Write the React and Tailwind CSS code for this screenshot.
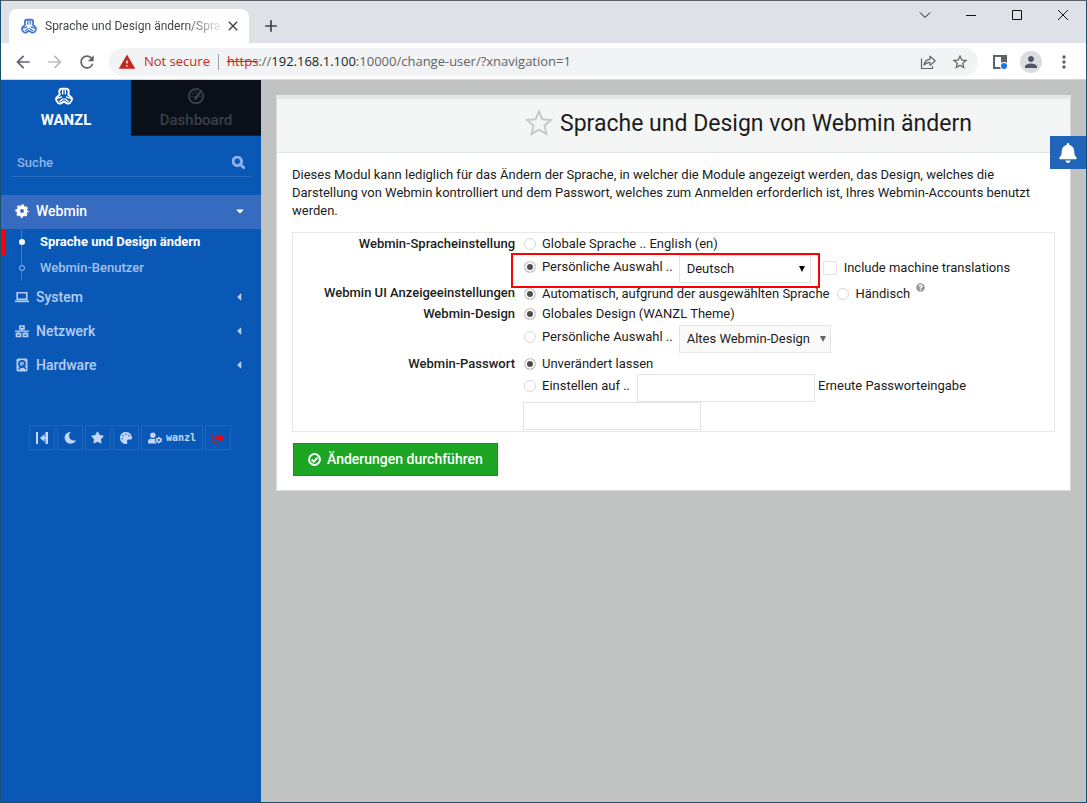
import { FaSearch, FaMoon, FaStar, FaPalette, FaUserCog, FaBell, FaCaretDown, FaCaretLeft, FaQuestionCircle } from "react-icons/fa";
import { MdArrowBack, MdArrowForward, MdRefresh, MdClose, MdAdd, MdWarning, MdStarBorder, MdPerson, MdMoreVert } from "react-icons/md";

const caption = "flex h-9 w-[46px] items-center justify-center text-[#111]";

function WebminLogo({ className }) {
  return (
    <svg className={className} viewBox="0 0 24 24" fill="none" stroke="currentColor" strokeWidth="2.600" strokeLinejoin="round" strokeLinecap="round">
      <path d="M6.200 10.200L5.700 6Q5.700 2.400 9 2.400h6q3.300 0 3.300 3.600l-.5 4.200 3.700 3.300q2.200 2.500.2 5.200l-1.400 2Q18.300 23 15.500 21.500L12 19.200 8.500 21.500Q5.700 23 3.700 20.700l-1.400-2q-2-2.700.2-5.200z" />
      <path d="M10.200 3v6.200M13.800 3v6.200M3.500 15.200l5.200-2M20.500 15.200l-5.200-2M6.500 19l4.200-3.200M17.500 19l-4.200-3.200" strokeWidth="1.900" />
    </svg>
  );
}

function TitleBar() {
  return (
    <div className="flex h-[42px] shrink-0 items-end justify-between bg-[#dee1e6] pl-2">
      <div className="flex items-center">
        <div className="flex h-[34px] w-60 items-center rounded-t-lg bg-white pl-3 pr-2">
          <WebminLogo className="size-4 shrink-0 text-[#3f78cf]" />
          <span className="ml-2 flex-1 whitespace-nowrap bg-gradient-to-r from-[#3c4043] from-80% to-[#3c4043]/10 bg-clip-text font-[Roboto,sans-serif] text-xs text-transparent">
            Sprache und Design ändern/Spra
          </span>
          <button aria-label="Tab schließen" className="ml-1 text-[#3c4043]">
            <MdClose className="size-4" />
          </button>
        </div>
        <button aria-label="Neuer Tab" className="ml-3 text-[#3c4043]">
          <MdAdd className="size-5" />
        </button>
      </div>
      <div className="flex self-start">
        <button aria-label="Tabs durchsuchen" className={caption + " pb-2"}>
          <svg className="h-3 w-3" viewBox="0 0 12 12" fill="none" stroke="currentColor"><path d="M1 3.500l5 5 5-5" /></svg>
        </button>
        <button aria-label="Minimieren" className={caption + " pb-2"}>
          <svg className="h-3 w-3" viewBox="0 0 12 12" stroke="currentColor" shapeRendering="crispEdges"><path d="M1 6.500h10" /></svg>
        </button>
        <button aria-label="Maximieren" className={caption + " pb-2"}>
          <svg className="h-3 w-3" viewBox="0 0 12 12" fill="none" stroke="currentColor"><path d="M1.500 1.500h9v9h-9z" /></svg>
        </button>
        <button aria-label="Schließen" className={caption + " pb-2"}>
          <svg className="h-3 w-3" viewBox="0 0 12 12" stroke="currentColor"><path d="M1 1l10 10M11 1L1 11" /></svg>
        </button>
      </div>
    </div>
  );
}

function Toolbar() {
  return (
    <div className="flex h-[37px] shrink-0 items-center border-b border-[#d5d7da] bg-white pl-3 pr-3 pt-px text-[#5f6368]">
      <button aria-label="Zurück"><MdArrowBack className="size-5" /></button>
      <button aria-label="Vorwärts" className="ml-3 text-[#b9bbbe]"><MdArrowForward className="size-5" /></button>
      <button aria-label="Neu laden" className="ml-3"><MdRefresh className="size-5" /></button>
      <div className="ml-3 flex h-7 flex-1 items-center rounded-full bg-[#f1f3f4] pl-[9px] pr-[9px] font-['Open_Sans',sans-serif] text-[13px]">
        <MdWarning className="size-[18px] text-[#c5281c]" />
        <span className="ml-2 text-[#c5281c]">Not secure</span>
        <span className="mx-2 h-4 w-px bg-[#9aa0a6]" />
        <span className="flex-1 whitespace-nowrap text-[#5f6368]">
          <span className="text-[#c5281c] line-through">https</span>://<span className="text-[#202124]">192.168.1.100</span>:10000/change-user/?xnavigation=1
        </span>
        <button aria-label="Teilen">
          <svg className="size-4" viewBox="0 0 16 16" fill="none" stroke="currentColor" strokeWidth="1.200">
            <path d="M1.500 4.500v10h11v-2.500" />
            <path d="M4 11.200c.4-3.700 2.500-5.700 6-5.900V2.200l5.200 4.600-5.200 4.600V8.300c-2.600 0-4.500.9-6 2.900z" strokeLinejoin="round" />
          </svg>
        </button>
        <button aria-label="Lesezeichen" className="ml-[15px]"><MdStarBorder className="size-[18px]" /></button>
      </div>
      <button aria-label="Seitenleiste" className="ml-3.5">
        <svg className="size-4" viewBox="0 0 16 16">
          <path d="M2 2h12v12H2z" fill="#fff" stroke="#5f6368" strokeWidth="2" />
          <path d="M9 1h6v8H9z" fill="#5f6368" />
          <circle cx="12" cy="12" r="4" fill="#fff" />
          <circle cx="12" cy="12" r="3" fill="#1a73e8" />
        </svg>
      </button>
      <button aria-label="Profil" className="ml-3 flex size-[22px] items-center justify-center rounded-full bg-[#dadce0] text-[#4d5566]">
        <MdPerson className="size-[18px]" />
      </button>
      <button aria-label="Menü" className="ml-3"><MdMoreVert className="size-5" /></button>
    </div>
  );
}

function GaugeIcon() {
  return (
    <svg className="size-4" viewBox="0 0 16 16" fill="none" stroke="currentColor" strokeWidth="1.900">
      <path d="M11.600 2A7.100 7.100 0 1 0 14.300 4.800" />
      <path d="M14 2L8 9.500" strokeWidth="2.400" />
      <circle cx="7.800" cy="9.800" r="2" fill="currentColor" stroke="none" />
      <path d="M3.200 8.500h1.500M4.500 5.200l1 1M7.800 3.300v1.500M11.300 8.500h1.500" strokeWidth="1.500" />
    </svg>
  );
}

function GearIcon() {
  return (
    <svg className="size-3.5" viewBox="0 0 16 16" fill="none" stroke="currentColor">
      <circle cx="8" cy="8" r="4.200" strokeWidth="4" />
      <circle cx="8" cy="8" r="6.400" strokeWidth="2.400" strokeDasharray="2.800 2.226" strokeDashoffset="1.400" />
    </svg>
  );
}

function LaptopIcon() {
  return (
    <svg className="h-3.5 w-3.5" viewBox="0 0 14 14" fill="none" stroke="currentColor" strokeWidth="1.600">
      <path d="M2.200 2.700h9.600v6.600H2.200z" />
      <path d="M0 11.300h14" strokeWidth="1.800" />
    </svg>
  );
}

function NetworkIcon() {
  return (
    <svg className="h-3.5 w-3.5" viewBox="0 0 14 14" fill="none" stroke="currentColor" strokeWidth="1.700">
      <path d="M5 2h4v2.800H5zM1.500 9.700h4v2.800h-4zM8.500 9.700h4v2.800h-4z" />
      <path d="M7 5v2M0 7.200h14M3.500 7v2.500M10.500 7v2.500" strokeWidth="1.300" />
    </svg>
  );
}

function DiskIcon() {
  return (
    <svg className="h-3.5 w-3.5" viewBox="0 0 14 14">
      <rect x="1.500" y="0.500" width="11" height="13" rx="1.500" fill="currentColor" />
      <circle cx="7" cy="6" r="3.900" fill="#0a58b6" />
      <circle cx="7" cy="6" r="2.300" fill="currentColor" opacity="0.750" />
      <path d="M3.500 11.500l2.300-2.500M7.500 6.500l3.500 4.800" stroke="#0a58b6" strokeWidth="1.300" />
    </svg>
  );
}

function NavItem({ icon, label }) {
  return (
    <a href="#nav" className="flex h-[34px] items-center pb-0.5 pl-3.5 pr-4 text-sm font-medium text-[#b8cdf3]">
      {icon}
      <span className="ml-[7px] flex-1">{label}</span>
      <FaCaretLeft className="size-3" />
    </a>
  );
}

const tool = "flex h-[25px] min-w-[26px] items-center justify-center border border-[#1f66bf] text-[#c3d6f8]";

function Sidebar() {
  return (
    <nav className="w-[260px] shrink-0 bg-[#0a58b6] font-[Roboto,sans-serif]">
      <div className="grid h-14 grid-cols-2 text-center">
        <a href="#wanzl" className="flex flex-col items-center pt-[7px] text-white">
          <WebminLogo className="mr-1 size-[18px]" />
          <span className="mt-[5px] text-[15px] font-bold leading-5">WANZL</span>
        </a>
        <a href="#dashboard" className="flex flex-col items-center border-b border-[#222] bg-[#0a101a] pt-[7px] text-[#3c3f46]">
          <span className="flex h-[18px] items-center"><GaugeIcon /></span>
          <span className="mt-[5px] text-[15px] font-medium leading-5">Dashboard</span>
        </a>
      </div>
      <div className="mx-2.5 mt-2.5 flex h-[31px] items-center border-b border-[#2a6dc4] pl-1.5 pr-1.5 pt-0.5 text-[#8fb3ee]">
        <input aria-label="Suche" placeholder="Suche" className="min-w-0 flex-1 bg-transparent pt-0.5 text-[13px] font-medium outline-none placeholder:text-[#8fb3e6]" />
        <FaSearch className="size-[13px]" stroke="currentColor" strokeWidth="36" />
      </div>
      <a href="#webmin" className="mt-[18px] flex h-[34px] items-center bg-[#376bbf] pb-0.5 pl-3.5 pr-[15px] text-sm font-medium text-white">
        <GearIcon />
        <span className="ml-[7px] flex-1">Webmin</span>
        <FaCaretDown className="size-3" />
      </a>
      <ul className="text-[13px]">
        <li className="flex h-[26px] items-stretch border-l-4 border-[#ff0000] font-bold text-white">
          <span className="ml-4 flex w-px items-center justify-center bg-[#3d7bcb]"><i className="size-1.5 shrink-0 rounded-full bg-white" /></span>
          <a href="#sprache" className="ml-[18px] self-center">Sprache und Design ändern</a>
        </li>
        <li className="flex h-[26px] items-stretch border-l-4 border-transparent font-medium text-[#a3c0f0]">
          <span className="ml-4 flex w-px items-center justify-center bg-[#3d7bcb]"><i className="size-1.5 shrink-0 rounded-full border border-[#a3c0f0] bg-[#0a58b6]" /></span>
          <a href="#benutzer" className="ml-[18px] self-center">Webmin-Benutzer</a>
        </li>
      </ul>
      <NavItem label="System" icon={<LaptopIcon />} />
      <NavItem label="Netzwerk" icon={<NetworkIcon />} />
      <NavItem label="Hardware" icon={<DiskIcon />} />
      <div className="mt-[42px] flex justify-center gap-0.5 pr-0.5">
        <button aria-label="Menü einklappen" className={tool}>
          <svg className="size-3" viewBox="0 0 12 12" fill="currentColor"><path d="M0 0h2v12H0zM9.500 0H12v12H9.500zM8.500 2v8L4 6zM8 5h3v2H8z" /></svg>
        </button>
        <button aria-label="Nachtmodus" className={tool}>
          <FaMoon className="size-3 -rotate-12" />
        </button>
        <button aria-label="Favoriten" className={tool}><FaStar className="size-[13px]" /></button>
        <button aria-label="Design" className={tool}><FaPalette className="size-3" /></button>
        <button className={tool + " gap-1 px-1.5"}>
          <FaUserCog className="size-3.5" />
          <span className="font-['DejaVu_Sans_Mono',monospace] text-[10px] font-bold">wanzl</span>
        </button>
        <button aria-label="Abmelden" className={tool}>
          <svg className="size-3" viewBox="0 0 12 12"><path d="M4.500 1.500H2.500Q1 1.500 1 3v6q0 1.500 1.500 1.500h2" fill="none" stroke="#f00" strokeWidth="1" /><path d="M3.500 4.200H7V1.500L12 6l-5 4.500V7.800H3.500z" fill="#f00" /></svg>
        </button>
      </div>
    </nav>
  );
}

function Radio({ name, checked, children }) {
  return (
    <label className="flex h-5 items-center whitespace-nowrap">
      <input
        type="radio"
        name={name}
        defaultChecked={checked}
        className="mx-px size-3 appearance-none rounded-full border border-[#d8d8d8] shadow-[inset_0_0_0_2px_#fff] checked:bg-[#4d4d4d]"
      />
      <span className="ml-[5px]">{children}</span>
    </label>
  );
}

function Row({ label, children }) {
  return (
    <div className="flex" role="group" aria-label={label}>
      <div className="w-[222px] shrink-0 text-right font-medium leading-[19px]">{label}</div>
      <div className="ml-2 min-w-0 flex-1">{children}</div>
    </div>
  );
}

function Select({ label, value, className, arrow }) {
  return (
    <span className="relative ml-1.5 flex h-7 items-center">
      <select aria-label={label} defaultValue={value} className={"h-7 appearance-none border border-[#e4e4e4] pl-[7px] outline-none " + className}>
        <option>{value}</option>
      </select>
      <svg className={"pointer-events-none absolute right-[5px] h-1.5 w-1.5 " + arrow} viewBox="0 0 6 6" fill="currentColor"><path d="M0 0h6L3 6z" /></svg>
    </span>
  );
}

function Settings() {
  return (
    <div className="mt-3 border border-[#e8e8e8] pb-px pt-px">
      <Row label="Webmin-Spracheinstellung">
        <Radio name="lang">Globale Sprache .. English (en)</Radio>
        <div className="relative flex h-[29px] items-start pt-px">
          <span className="pt-0.5"><Radio name="lang" checked>Persönliche Auswahl ..</Radio></span>
          <Select label="Sprache" value="Deutsch" className="w-[132px] bg-white" arrow="mr-px text-black" />
          <label className="ml-3 flex h-[26px] items-center">
            <input type="checkbox" className="size-3.5 appearance-none border border-[#ece2e2]" />
            <span className="ml-[7px]">Include machine translations</span>
          </label>
          <span className="pointer-events-none absolute -left-3 -top-px h-[35px] w-[309px] border-2 border-[#ff0000]" />
        </div>
      </Row>
      <Row label="Webmin UI Anzeigeeinstellungen">
        <div className="flex items-center">
          <Radio name="locale" checked>Automatisch, aufgrund der ausgewählten Sprache</Radio>
          <span className="ml-[7px]"><Radio name="locale">Händisch</Radio></span>
          <FaQuestionCircle className="mb-3 ml-1.5 size-[9px] text-[#999]" />
        </div>
      </Row>
      <Row label="Webmin-Design">
        <Radio name="theme" checked>Globales Design (WANZL Theme)</Radio>
        <div className="flex h-[30px] items-start pt-px">
          <span className="pt-0.5"><Radio name="theme">Persönliche Auswahl ..</Radio></span>
          <Select label="Design" value="Altes Webmin-Design" className="w-[152px] bg-[#fafafa]" arrow="text-[#666]" />
        </div>
      </Row>
      <Row label="Webmin-Passwort">
        <Radio name="pass" checked>Unverändert lassen</Radio>
        <div className="flex h-7 items-start">
          <span className="pt-0.5"><Radio name="pass">Einstellen auf ..</Radio></span>
          <input type="password" aria-label="Passwort" className="ml-[7px] h-7 w-[178px] border border-[#e4e4e4] outline-none" />
          <label htmlFor="repeat" className="ml-[3px] leading-6">Erneute Passworteingabe</label>
        </div>
        <input id="repeat" type="password" className="block h-7 w-[178px] border border-[#e4e4e4] outline-none" />
      </Row>
    </div>
  );
}

export default function App() {
  return (
    <div className="flex min-h-screen flex-col border border-[#1b4f72] border-t-[#5f6165]">
      <TitleBar />
      <Toolbar />
      <div className="flex flex-1">
        <Sidebar />
        <main className="relative flex-1 bg-[#c1c3c2] pl-[15px] pr-[15px] pt-[15px] font-[Roboto,sans-serif] text-[13px] text-[#1c1c1c]">
          <section className="border border-t-4 border-[#d9dad9] border-t-[#e6e6e6] bg-white">
            <header className="flex h-[54px] items-center justify-center border-b border-[#e0e3e2] bg-[#f4f6f5] pb-0.5 pl-[150px]">
              <button aria-label="Favorit" className="pb-1 text-[#c8c8c8]">
                <svg className="size-7" viewBox="0 0 28 28" fill="none" stroke="currentColor" strokeWidth="2"><path d="M14 2.500l3.400 7.800 8.500.8-6.400 5.600 1.900 8.300L14 20.600 6.600 25l1.900-8.300L2.100 11.100l8.500-.8z" /></svg>
              </button>
              <h1 className="ml-[7px] text-[23px] text-[#1c1c1c]">Sprache und Design von Webmin ändern</h1>
            </header>
            <div className="px-[15px] pb-3.5 pt-[13px]">
              <p className="leading-[18px]">
                Dieses Modul kann lediglich für das Ändern der Sprache, in welcher die Module angezeigt werden, das Design, welches die Darstellung von Webmin kontrolliert und dem Passwort, welches zum Anmelden erforderlich ist, Ihres Webmin-Accounts benutzt werden.
              </p>
              <Settings />
              <button className="ml-px mt-[11px] flex h-[33px] items-center border border-[#12931c] bg-[#1ca624] px-3.5 pb-px text-sm font-medium text-white">
                <svg className="size-[13px]" viewBox="0 0 13 13" fill="none" stroke="currentColor" strokeWidth="2"><circle cx="6.500" cy="6.500" r="5.400" /><path d="M3.700 6.500l2.100 2.100 3.700-3.900" /></svg>
                <span className="ml-1.5">Änderungen durchführen</span>
              </button>
            </div>
          </section>
          <button aria-label="Benachrichtigungen" className="absolute right-0 top-14 flex h-[33px] w-9 items-center justify-center bg-[#2065ba] text-white">
            <FaBell className="size-5" />
          </button>
        </main>
      </div>
    </div>
  );
}
